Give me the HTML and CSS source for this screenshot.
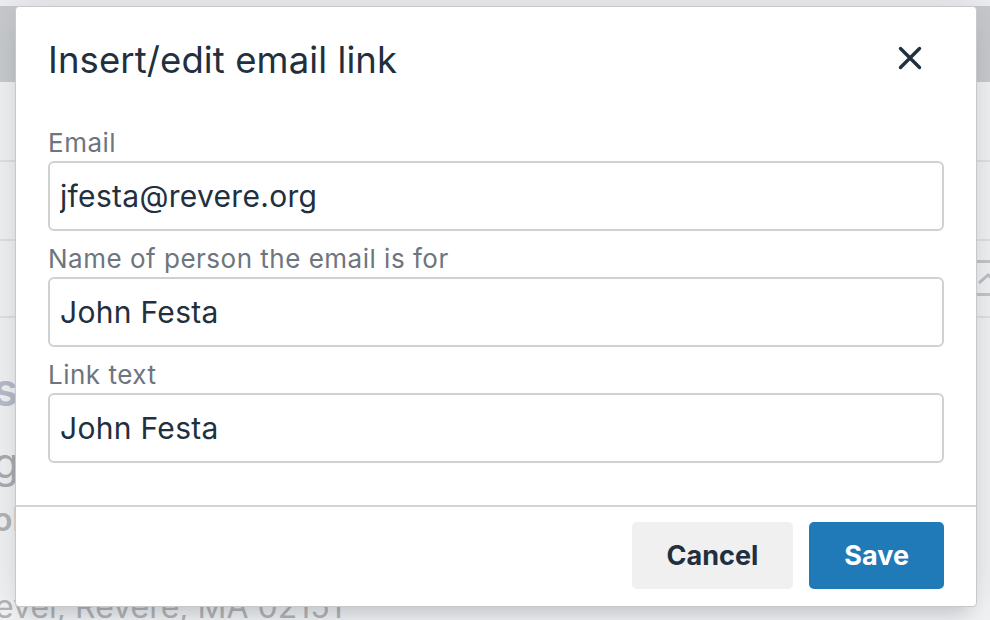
FILE: index.html
```html
<!DOCTYPE html>
<html lang="en">
<head>
    <meta charset="UTF-8">
    <meta name="viewport" content="width=device-width, initial-scale=1.0">
    <title>Insert/edit email link</title>
    <link rel="stylesheet" href="styles.css">
</head>
<body>
    <div class="page">
        <div class="page-top"></div>
        <div class="page-header"></div>
        <div class="page-row row-1"></div>
        <div class="page-row row-2"></div>
        <div class="page-row row-3">
            <div class="collapse-toggle">
                <svg width="22" height="14" viewBox="0 0 22 14" aria-hidden="true">
                    <path d="M2 12 L11 4 L20 12" fill="none" stroke="#bcbfc6" stroke-width="3"/>
                </svg>
            </div>
        </div>
        <div class="page-content">
            <div class="contact-name">s</div>
            <div class="contact-org">g</div>
            <div class="contact-meta">ol</div>
        </div>
        <div class="contact-address">evel, Revere, MA 02151</div>
    </div>

    <div class="dialog" role="dialog" aria-labelledby="dialog-title">
        <div class="dialog-header">
            <h1 class="dialog-title" id="dialog-title">Insert/edit email link</h1>
            <button class="close-btn" type="button" aria-label="Close">
                <svg width="24" height="24" viewBox="0 0 24 24" aria-hidden="true">
                    <path d="M2.5 2.5 L21.5 21.5 M21.5 2.5 L2.5 21.5" stroke="#222f3e" stroke-width="3.4" stroke-linecap="round"/>
                </svg>
            </button>
        </div>

        <div class="dialog-body">
            <div class="field">
                <label class="field-label" for="email">Email</label>
                <input class="field-input" id="email" type="text" value="jfesta@revere.org">
            </div>
            <div class="field">
                <label class="field-label" for="person">Name of person the email is for</label>
                <input class="field-input" id="person" type="text" value="John Festa">
            </div>
            <div class="field">
                <label class="field-label" for="linktext">Link text</label>
                <input class="field-input" id="linktext" type="text" value="John Festa">
            </div>
        </div>

        <div class="dialog-footer">
            <button class="btn btn-secondary" type="button">Cancel</button>
            <button class="btn btn-primary" type="button">Save</button>
        </div>
    </div>
</body>
</html>
```

FILE: styles.css
```css
* {
    margin: 0;
    padding: 0;
    box-sizing: border-box;
    font-family: 'Inter', 'Noto Sans', sans-serif;
}

body {
    width: 990px;
    height: 620px;
    overflow: hidden;
    position: relative;
    background: #e9eaec;
}

/* ---------- background page ---------- */

.page {
    display: flex;
    flex-direction: column;
    height: 100%;
    background: #f2f3f4;
}

.page-top {
    height: 6px;
    background: #eeeff1;
}

.page-header {
    height: 76px;
    background: #c9cbce;
}

.page-row {
    display: flex;
    justify-content: flex-end;
    align-items: center;
    border-bottom: 2px solid #e0e1e3;
}

.row-1 {
    height: 80px;
}

.row-2 {
    height: 79px;
}

.row-3 {
    height: 77px;
}

.collapse-toggle {
    width: 46px;
    height: 36px;
    margin-right: -21px;
    margin-top: -2px;
    display: flex;
    align-items: center;
    justify-content: center;
    border-top: 3px solid #c3c5ca;
    border-bottom: 3px solid #c3c5ca;
}

.page-content {
    flex: 1;
    padding-top: 44px;
    margin-left: -7px;
}

.contact-name {
    font-size: 46px;
    font-weight: 600;
    line-height: 54px;
    color: #b9bcc9;
}

.contact-org {
    margin-top: 22px;
    font-size: 42px;
    line-height: 50px;
    color: #aaacaf;
}

.contact-meta {
    margin-top: 12px;
    font-size: 32px;
    font-weight: 600;
    line-height: 40px;
    color: #b3b4b6;
}

.contact-address {
    position: absolute;
    left: -5px;
    top: 588px;
    font-size: 32px;
    line-height: 38px;
    color: #b3b4b6;
    white-space: nowrap;
}

/* ---------- dialog ---------- */

.dialog {
    position: absolute;
    left: 15px;
    top: 6px;
    width: 962px;
    height: 601px;
    display: flex;
    flex-direction: column;
    background: #fff;
    border: 1px solid #c8c8c8;
    border-radius: 4px;
    box-shadow: 0 16px 16px -10px rgba(34, 47, 62, 0.15), 0 0 40px 1px rgba(34, 47, 62, 0.15);
}

.dialog-header {
    display: flex;
    justify-content: space-between;
    align-items: center;
    padding: 31px 46px 0 32px;
}

.dialog-title {
    font-size: 36.5px;
    font-weight: 400;
    line-height: 44px;
    letter-spacing: 0.1px;
    color: #222f3e;
}

.close-btn {
    width: 40px;
    height: 40px;
    margin-top: -4px;
    display: flex;
    align-items: center;
    justify-content: center;
    background: none;
    border: none;
}

.dialog-body {
    flex: 1;
    display: flex;
    flex-direction: column;
    gap: 14px;
    padding: 47px 32px 0;
}

.field {
    display: flex;
    flex-direction: column;
}

.field-label {
    font-size: 26px;
    line-height: 28px;
    letter-spacing: 0.5px;
    margin-bottom: 4px;
    color: #6d757e;
}

.field-input {
    height: 70px;
    padding: 0 10px;
    font-size: 30px;
    letter-spacing: 0.3px;
    color: #222f3e;
    background: #fff;
    border: 2px solid #d0d0d0;
    border-radius: 6px;
    outline: none;
}

.dialog-footer {
    display: flex;
    justify-content: flex-end;
    gap: 16px;
    padding: 15px 32px 17px;
    border-top: 2px solid #d4d4d4;
}

.btn {
    height: 67px;
    padding: 0 35px;
    font-size: 27px;
    font-weight: 700;
    border: none;
    border-radius: 5px;
}

.btn-secondary {
    background: #f0f0f0;
    color: #222f3e;
}

.btn-primary {
    background: #207ab7;
    color: #fff;
}
```
